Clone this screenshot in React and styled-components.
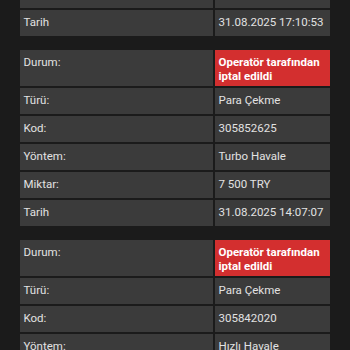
import React from 'react';
import styled, { createGlobalStyle } from 'styled-components';

const GlobalStyle = createGlobalStyle`
    body {
        margin: 0;
        background-color: #1b1b1b;
        font-family: Roboto, "Liberation Sans", sans-serif;
    }
`;

const Page = styled.div`
    height: 350px;
    overflow: hidden;
    padding: 0 20px;
`;

// list is scrolled, the first card is mostly above the window
const List = styled.div`
    display: flex;
    flex-direction: column;
    gap: 14px;
    margin-top: -140px;
`;

const Card = styled.div`
    display: grid;
    grid-template-columns: 193px 1fr;
    gap: 2px;
`;

const Cell = styled.div`
    box-sizing: border-box;
    min-height: 26px;
    padding: 5px 3.5px 3px;
    background-color: ${props => (props.$alert ? '#d32f2f' : '#3b3b3b')};
    color: ${props => (props.$alert ? '#ffffff' : '#e2e2e2')};
    font-size: 11.5px;
    line-height: 14px;
    font-weight: ${props => (props.$alert ? 700 : 400)};
`;

const transactions = [
    { code: '305860114', method: 'Turbo Havale', amount: '5 000 TRY', date: '31.08.2025 17:10:53' },
    { code: '305852625', method: 'Turbo Havale', amount: '7 500 TRY', date: '31.08.2025 14:07:07' },
    { code: '305842020', method: 'Hızlı Havale', amount: '7 500 TRY', date: '31.08.2025 11:42:18' },
];

const Transaction = ({ item }) => (
    <Card>
        <Cell>Durum:</Cell>
        <Cell $alert>Operatör tarafından iptal edildi</Cell>
        <Cell>Türü:</Cell>
        <Cell>Para Çekme</Cell>
        <Cell>Kod:</Cell>
        <Cell>{item.code}</Cell>
        <Cell>Yöntem:</Cell>
        <Cell>{item.method}</Cell>
        <Cell>Miktar:</Cell>
        <Cell>{item.amount}</Cell>
        <Cell>Tarih</Cell>
        <Cell>{item.date}</Cell>
    </Card>
);

const App = () => {
    return (
        <Page>
            <GlobalStyle />
            <List>
                {transactions.map(t => <Transaction key={t.code} item={t} />)}
            </List>
        </Page>
    );
};

export default App;
